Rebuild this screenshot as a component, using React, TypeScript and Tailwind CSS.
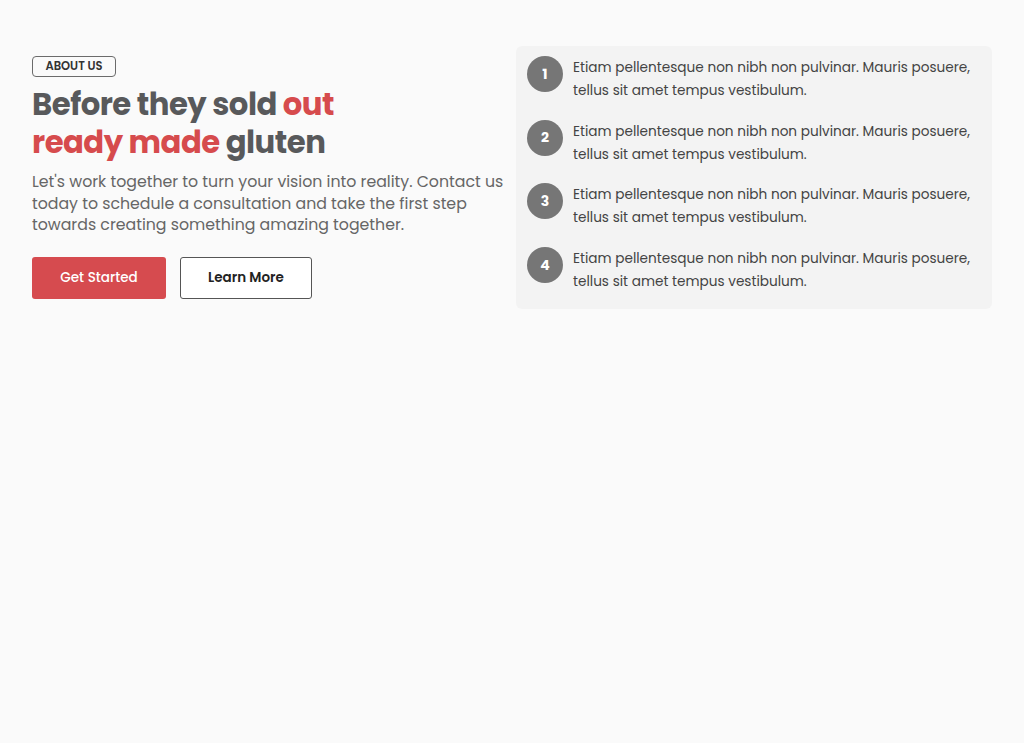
import React from "react";

const items = [1, 2, 3, 4];

export default function App() {
  return (
    <div
      className="min-h-[743px] w-full bg-[#fafafa]"
      style={{ fontFamily: "Poppins, 'Open Sans', sans-serif" }}
    >
      <div className="flex gap-2 px-8 pt-[46px]">
        <div className="flex w-[476px] flex-col pt-[10px]">
          <div className="flex">
            <span className="flex h-[21px] w-[84px] items-center justify-center rounded-[4px] border border-[#6b6b6b] text-[11.5px] font-semibold uppercase text-[#333]">
              About us
            </span>
          </div>
          <h1 className="mt-[9px] flex flex-col text-[30.7px] font-bold leading-[38px] tracking-[-0.5px] text-[#58595b]">
            <span className="block h-[38px]">
              Before they sold{" "}
              <span className="inline-block h-[38px] text-[#d64b4d]">out</span>
            </span>
            <span className="block h-[38px]">
              <span className="inline-block h-[38px] text-[#d64b4d]">ready made</span> gluten
            </span>
          </h1>
          <p className="mt-[9px] text-[15.75px] leading-[21.5px] text-[#666]">
            Let's work together to turn your vision into reality. Contact us today to schedule a consultation and take the first step towards creating something amazing together.
          </p>
          <div className="mt-[21px] flex gap-[14px]">
            <button className="h-[42px] w-[134px] rounded-[3px] bg-[#d64b4f] pt-[2px] text-[13.5px] font-medium text-white">
              Get Started
            </button>
            <button className="h-[42px] w-[132px] rounded-[3px] border border-[#555] bg-white pt-[2px] text-[13.5px] font-semibold text-[#222]">
              Learn More
            </button>
          </div>
        </div>
        <div className="flex w-[476px] flex-col gap-[17.7px] self-start rounded-[6px] bg-[#f3f3f3] px-[11px] pb-[16px] pt-[10px]">
          {items.map((n) => (
            <div key={n} className="flex gap-[10px]">
              <div className="flex h-[36px] w-[36px] shrink-0 items-center justify-center rounded-full bg-[#767676] text-[14px] font-bold text-white">
                {n}
              </div>
              <p className="text-[13.65px] leading-[23px] text-[#444]">
                Etiam pellentesque non nibh non pulvinar. Mauris posuere, tellus sit amet tempus vestibulum.
              </p>
            </div>
          ))}
        </div>
      </div>
    </div>
  );
}
